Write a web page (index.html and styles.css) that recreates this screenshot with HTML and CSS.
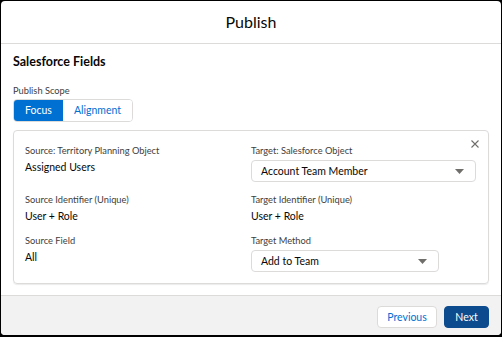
FILE: index.html
```html
<!DOCTYPE html>
<html lang="en">
<head>
<meta charset="utf-8">
<title>Publish</title>
<link rel="stylesheet" href="styles.css">
</head>
<body>
<div class="modal">
  <header class="modal-header">
    <h1 class="modal-title">Publish</h1>
  </header>
  <main class="modal-body">
    <h2 class="section-title">Salesforce Fields</h2>
    <div class="field-label scope-label">Publish Scope</div>
    <div class="btn-group">
      <button class="seg seg-active">Focus</button>
      <button class="seg">Alignment</button>
    </div>
    <section class="card">
      <button class="close" aria-label="Remove">
        <svg width="8" height="8" viewBox="0 0 8 8"><path d="M0.5 0.5 L7.5 7.5 M7.5 0.5 L0.5 7.5" stroke="#706e6b" stroke-width="1.1" fill="none"/></svg>
      </button>
      <div class="grid">
        <div class="cell">
          <div class="field-label">Source: Territory Planning Object</div>
          <div class="field-value">Assigned Users</div>
        </div>
        <div class="cell">
          <div class="field-label">Target: Salesforce Object</div>
          <div class="select select-wide">
            <span>Account Team Member</span>
            <svg class="caret" width="9" height="5" viewBox="0 0 9 5"><path d="M0 0 H9 L4.5 5 Z" fill="#706e6b"/></svg>
          </div>
        </div>
        <div class="cell">
          <div class="field-label">Source Identifier (Unique)</div>
          <div class="field-value">User + Role</div>
        </div>
        <div class="cell">
          <div class="field-label">Target Identifier (Unique)</div>
          <div class="field-value">User + Role</div>
        </div>
        <div class="cell">
          <div class="field-label">Source Field</div>
          <div class="field-value">All</div>
        </div>
        <div class="cell">
          <div class="field-label">Target Method</div>
          <div class="select select-narrow">
            <span>Add to Team</span>
            <svg class="caret" width="9" height="5" viewBox="0 0 9 5"><path d="M0 0 H9 L4.5 5 Z" fill="#706e6b"/></svg>
          </div>
        </div>
      </div>
    </section>
  </main>
  <footer class="modal-footer">
    <button class="btn btn-neutral">Previous</button>
    <button class="btn btn-brand">Next</button>
  </footer>
</div>
</body>
</html>
```

FILE: styles.css
```css
* { box-sizing: border-box; }
html, body { margin: 0; padding: 0; background: #000; }
body {
  width: 502px;
  height: 337px;
  padding: 1px 1px 2px 1px;
  font-family: Lato, "Open Sans", sans-serif;
  color: #080707;
}
.modal {
  height: 334px;
  background: #fff;
  border-radius: 4px;
  overflow: hidden;
  display: flex;
  flex-direction: column;
}
.modal-header {
  height: 43px;
  border-bottom: 1px solid #dddbda;
  display: flex;
  align-items: center;
  justify-content: center;
  flex: 0 0 auto;
}
.modal-title {
  margin: 0;
  font-size: 16px;
  font-weight: 400;
  line-height: 20px;
  color: #080707;
}
.modal-body {
  padding: 10px 12px 11px 12px;
  border-bottom: 1px solid #dddbda;
  flex: 0 0 auto;
}
.section-title {
  margin: 0;
  font-size: 12.5px;
  font-weight: 700;
  line-height: 16px;
}
.field-label {
  font-size: 9.3px;
  line-height: 12px;
  color: #3e3e3c;
}
.scope-label { margin-top: 15px; }
.btn-group {
  display: flex;
  width: fit-content;
  margin-top: 2px;
  border: 1px solid #dddbda;
  border-radius: 4px;
  overflow: hidden;
  height: 23px;
}
.seg {
  font-family: inherit;
  font-size: 10.5px;
  border: 0;
  background: #fff;
  color: #0070d2;
  padding: 0;
  height: 21px;
  line-height: 21px;
  width: 69px;
}
.seg-active {
  background: #0070d2;
  color: #fff;
  width: 49px;
}
.card {
  position: relative;
  margin-top: 8px;
  border: 1px solid #dddbda;
  border-radius: 4px;
  box-shadow: 0 1px 1px rgba(0,0,0,0.08);
  padding: 14px 12px 11px 11px;
}
.close {
  position: absolute;
  top: 9px;
  right: 9px;
  border: 0;
  background: none;
  padding: 0;
  width: 8px;
  height: 8px;
  display: flex;
}
.grid {
  display: grid;
  grid-template-columns: 226px 1fr;
  row-gap: 12px;
}
.field-value {
  margin-top: 3px;
  font-size: 10.5px;
  line-height: 14px;
}
.select {
  margin-top: 3px;
  height: 22px;
  border: 1px solid #dddbda;
  border-radius: 4px;
  display: flex;
  align-items: center;
  justify-content: space-between;
  padding: 0 11px 0 9px;
  font-size: 10.5px;
}
.select-wide { width: 225px; }
.select-narrow { width: 188px; }
.caret { display: block; }
.modal-footer {
  flex: 1;
  background: #f3f2f2;
  display: flex;
  justify-content: flex-end;
  align-items: flex-start;
  gap: 7px;
  padding: 10px 12px 0 0;
}
.btn {
  font-family: inherit;
  font-size: 10.5px;
  height: 22px;
  border-radius: 4px;
  padding: 0;
}
.btn-neutral {
  width: 60px;
  background: #fff;
  border: 1px solid #dddbda;
  color: #0070d2;
}
.btn-brand {
  width: 45px;
  background: #0b4b8e;
  border: 1px solid #0b4b8e;
  color: #fff;
}
```
